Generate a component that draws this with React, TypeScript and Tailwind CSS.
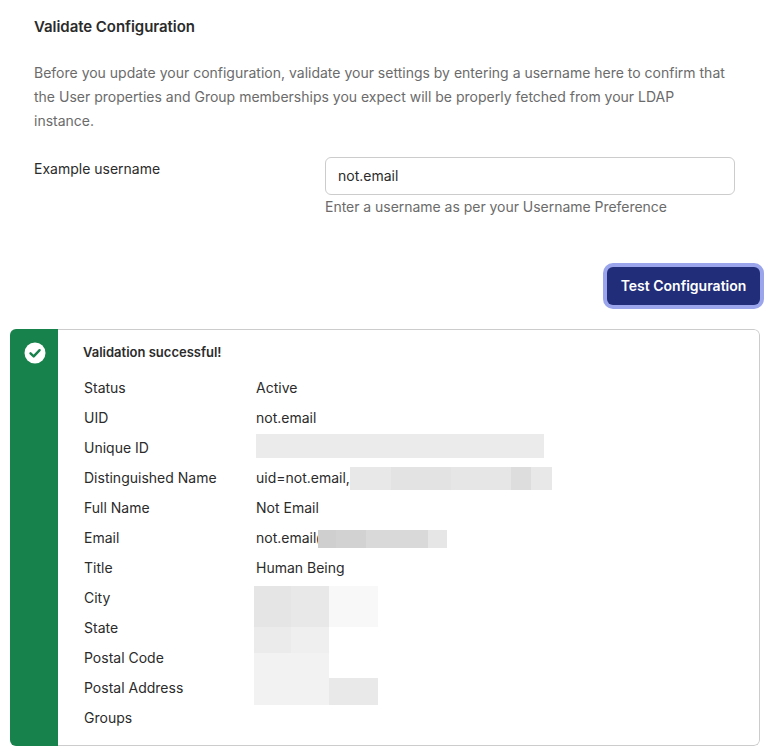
const rows: [string, string][] = [
  ["Status", "Active"],
  ["UID", "not.email"],
  ["Unique ID", ""],
  ["Distinguished Name", "uid=not.email,"],
  ["Full Name", "Not Email"],
  ["Email", "not.email@"],
  ["Title", "Human Being"],
  ["City", ""],
  ["State", ""],
  ["Postal Code", ""],
  ["Postal Address", ""],
  ["Groups", ""],
];

export default function App() {
  return (
    <div className="relative w-[770px] h-[755px] overflow-hidden bg-white font-['Inter',sans-serif] text-[14px] text-[#2b2b2b] px-[10px]">
      <div className="px-6">
        <h2 className="pt-[17px] h-[37px] text-[15px] leading-5 font-semibold tracking-[-0.05px] text-[#2b2b2b]">Validate Configuration</h2>
        <p className="mt-[24px] leading-6 text-[#6b6b6b]">
          Before you update your configuration, validate your settings by entering a username here to confirm that the User properties and Group memberships you expect will be properly fetched from your LDAP instance.
        </p>
        <div className="mt-[24px] flex">
          <label className="w-[291px] pt-[2px] leading-5 text-[#2b2b2b]">Example username</label>
          <div className="w-[410px]">
            <div className="h-[38px] rounded-md border border-[#cccccc] px-3 pb-[1px] flex items-center text-[#2b2b2b]">not.email</div>
            <p className="leading-6 text-[#6b6b6b] tracking-[-0.03px]">Enter a username as per your Username Preference</p>
          </div>
        </div>
      </div>
      <div className="mt-[48px] flex justify-end">
        <button className="w-[153px] h-[38px] pb-[2px] rounded-md bg-[#212d78] text-white font-semibold text-[14px] ring-4 ring-[#9aa5ec]">Test Configuration</button>
      </div>
      <div className="mt-[24px] h-[417px] flex rounded-md overflow-hidden">
        <div className="w-[48px] bg-[#18824c] flex justify-center pt-[13px] pl-[2px] shrink-0">
          <svg width="22" height="22" viewBox="0 0 22 22" aria-hidden="true">
            <circle cx="11" cy="11" r="10.5" fill="#ffffff" />
            <path d="M6.5 11.3 L9.7 14.4 L15.6 8.2" fill="none" stroke="#18824c" strokeWidth="2.4" strokeLinecap="round" strokeLinejoin="round" />
          </svg>
        </div>
        <div className="pl-[26px] pt-[12px] flex-1 border-y border-r border-[#cccccc] rounded-r-md">
          <div className="h-[20px] -ml-px leading-5 text-[13px] font-semibold text-[#2b2b2b]">Validation successful!</div>
          <div className="mt-[10px]">
            {rows.map(([k, v]) => (
              <div key={k} className="h-[30px] flex items-center">
                <span className="w-[172px] text-[#2b2b2b]">{k}</span>
                <span className="text-[#2b2b2b]">{v}</span>
              </div>
            ))}
          </div>
        </div>
      </div>

      <div className="absolute left-[256px] top-[434px] w-[288px] h-[24px] bg-[#ebebeb]" />

      <div className="absolute left-[350px] top-[467px] h-[23px] flex">
        <div className="w-[41px] bg-[#e8e8e8]" />
        <div className="w-[60px] bg-[#e2e3e2]" />
        <div className="w-[60px] bg-[#e6e6e6]" />
        <div className="w-[20px] bg-[#dddddd]" />
        <div className="w-[21px] bg-[#e8e8e8]" />
      </div>

      <div className="absolute left-[318px] top-[530px] h-[18px] flex">
        <div className="w-[18px] bg-[#cfcfcf]" />
        <div className="w-[30px] bg-[#d2d2d2]" />
        <div className="w-[62px] bg-[#d9d9d9]" />
        <div className="w-[19px] bg-[#e6e6e6]" />
      </div>

      <div className="absolute left-[254px] top-[586px] w-[124px] h-[119px] grid grid-cols-[37px_38px_49px] grid-rows-[41px_26px_25px_27px]">
        <div className="bg-[#e5e5e5]" />
        <div className="bg-[#e8e8e8]" />
        <div className="bg-[#f8f8f8]" />
        <div className="bg-[#ebebeb]" />
        <div className="bg-[#efefef]" />
        <div />
        <div className="col-span-2 row-span-2 bg-[#f2f2f2]" />
        <div />
        <div className="bg-[#e9e9e9]" />
      </div>
    </div>
  );
}
